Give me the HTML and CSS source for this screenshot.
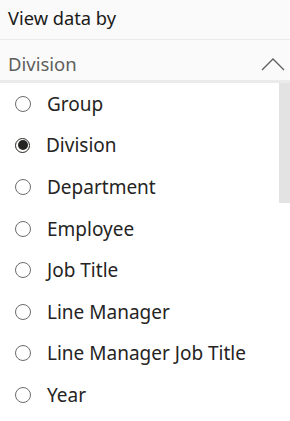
FILE: index.html
```html
<!DOCTYPE html>
<html lang="en">
<head>
    <meta charset="UTF-8">
    <meta name="viewport" content="width=device-width, initial-scale=1.0">
    <title>View data by</title>
    <link rel="stylesheet" href="styles.css">
</head>
<body>
    <div class="panel">
        <div class="title">View data by</div>
        <div class="dropdown">
            <span class="selected">Division</span>
            <svg class="chevron" width="24" height="13" viewBox="0 0 24 13">
                <polyline points="1,12 12,1 23,12" fill="none" stroke="#605e5c" stroke-width="1.3"/>
            </svg>
        </div>
        <div class="list">
            <div class="options">
                <label class="option"><span class="radio"></span>Group</label>
                <label class="option"><span class="radio checked"></span>Division</label>
                <label class="option"><span class="radio"></span>Department</label>
                <label class="option"><span class="radio"></span>Employee</label>
                <label class="option"><span class="radio"></span>Job Title</label>
                <label class="option"><span class="radio"></span>Line Manager</label>
                <label class="option"><span class="radio"></span>Line Manager Job Title</label>
                <label class="option"><span class="radio"></span>Year</label>
            </div>
            <div class="scrollbar"><div class="thumb"></div></div>
        </div>
    </div>
</body>
</html>
```

FILE: styles.css
```css
body {
    margin: 0;
    padding: 0;
    font-family: "Noto Sans", "Open Sans", sans-serif;
    background: #fff;
    color: #252423;
}
.panel {
    width: 290px;
    height: 421px;
    overflow: hidden;
}
.title {
    height: 40px;
    box-sizing: border-box;
    padding: 6px 0 0 8px;
    font-size: 18.3px;
    line-height: 24px;
    color: #1b1a19;
    background: #fafafa;
    border-bottom: 1px solid #eaeaea;
}
.dropdown {
    height: 43px;
    box-sizing: border-box;
    display: flex;
    align-items: flex-start;
    justify-content: space-between;
    padding: 12px 5px 0 8px;
    background: #fafafa;
    border-bottom: 3px solid #ebebeb;
    color: #605e5c;
    font-size: 18.5px;
    line-height: 24px;
}
.chevron {
    margin-top: 6px;
}
.list {
    display: flex;
}
.options {
    flex: 1;
}
.option {
    display: flex;
    align-items: center;
    height: 41.6px;
    padding-left: 15px;
    font-size: 19px;
}
.radio {
    width: 14px;
    height: 14px;
    border: 1.2px solid #6e6c6a;
    border-radius: 50%;
    margin-right: 16px;
    position: relative;
    flex-shrink: 0;
}
.radio.checked {
    border: 1.5px solid #252423;
    width: 13px;
    height: 13px;
}
.radio.checked::after {
    content: "";
    position: absolute;
    left: 1.5px;
    top: 1.5px;
    width: 10px;
    height: 10px;
    border-radius: 50%;
    background: #252423;
}
.scrollbar {
    width: 11px;
}
.thumb {
    height: 120px;
    background: #e3e3e3;
}
```
